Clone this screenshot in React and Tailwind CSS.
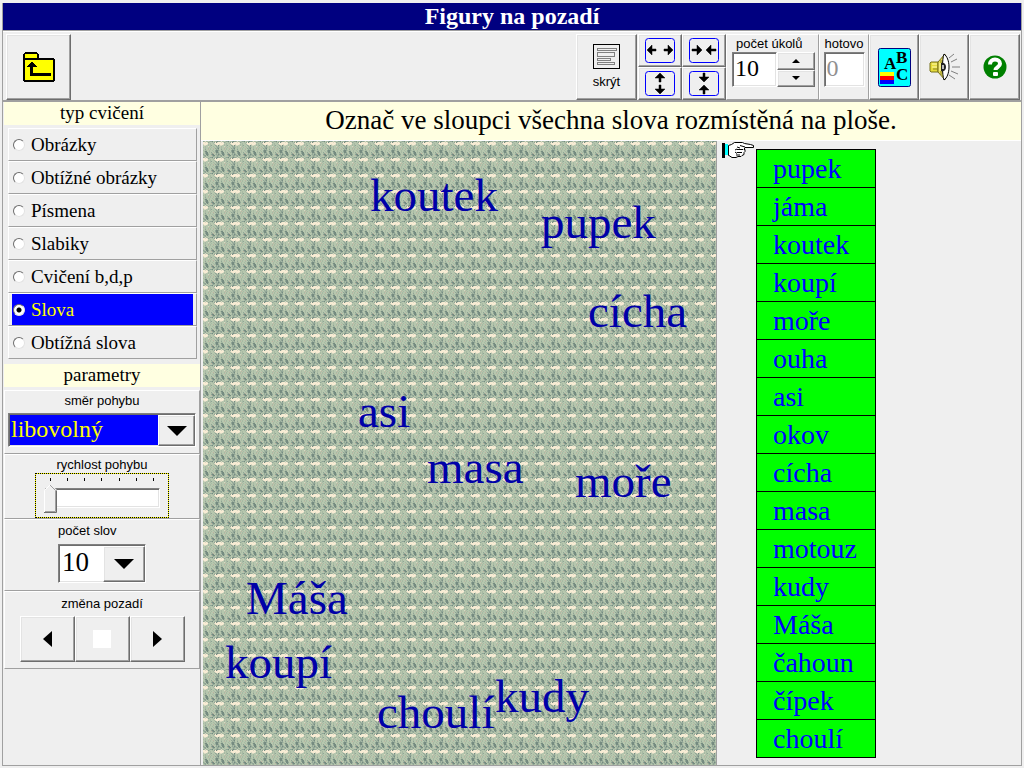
import React, { useState } from 'react';

const EXERCISES = [
    'Obrázky',
    'Obtížné obrázky',
    'Písmena',
    'Slabiky',
    'Cvičení b,d,p',
    'Slova',
    'Obtížná slova',
];

const COLUMN = [
    'pupek', 'jáma', 'koutek', 'koupí', 'moře', 'ouha', 'asi', 'okov',
    'cícha', 'masa', 'motouz', 'kudy', 'Máša', 'čahoun', 'čípek', 'choulí',
];

const BOARD = [
    { text: 'koutek', pos: 'left-[167px] top-[27px]' },
    { text: 'pupek', pos: 'left-[338px] top-[54px]' },
    { text: 'cícha', pos: 'left-[385px] top-[143px]' },
    { text: 'asi', pos: 'left-[155px] top-[243px]' },
    { text: 'masa', pos: 'left-[224px] top-[299px]' },
    { text: 'moře', pos: 'left-[372px] top-[313px]' },
    { text: 'Máša', pos: 'left-[43px] top-[430px]' },
    { text: 'koupí', pos: 'left-[22px] top-[494px]' },
    { text: 'choulí', pos: 'left-[174px] top-[544px]' },
    { text: 'kudy', pos: 'left-[292px] top-[528px]' },
];

// 16x16 stone tile, one letter per pixel
const TILE = [
    'cbebbabccdabbcdc',
    'wwewecbaabacwdew',
    'wwwwwaabaabewwww',
    'ewwwebabaaabewww',
    'aeeaababcaaacbed',
    'aabaaeabaabaacbc',
    'babaaapabaababcc',
    'aabaababaapacbcd',
    'aacaapabaabaacbc',
    'babbaabaabaacddc',
    'abddaabaaabacddb',
    'aacddabacaabbddc',
    'bacddbaabcpaacbc',
    'cbaddcaacddabcbd',
    'bccbdbaapcddabcc',
    'abcaabaaabcbabcb',
];

const TONES = {
    a: '#b7c7ae',
    b: '#a7b9a3',
    c: '#8fa496',
    d: '#758b80',
    e: '#d9d8c2',
    w: '#f8ecd4',
    p: '#bfb3a1',
};

const RAISED = 'bg-[#efefef] border border-t-white border-l-white border-b-[#6d6d6d] border-r-[#6d6d6d] shadow-[inset_-1px_-1px_0_#a0a0a0,inset_1px_1px_0_#e3e3e3]';
const SUNKEN = 'border border-t-[#808080] border-l-[#808080] border-b-white border-r-white shadow-[inset_1px_1px_0_#6d6d6d,inset_-1px_-1px_0_#e3e3e3]';
const PANEL = 'border border-t-white border-l-white border-b-[#a0a0a0] border-r-[#a0a0a0]';

const Stones = () => (
    <svg className="absolute inset-0 size-full" shapeRendering="crispEdges" aria-hidden="true">
        <defs>
            <pattern id="stones" width="16" height="16" patternUnits="userSpaceOnUse">
                {TILE.map((row, y) =>
                    row.split('').map((tone, x) => (
                        <rect key={`${x}-${y}`} x={x} y={y} width="1" height="1" fill={TONES[tone]} />
                    ))
                )}
            </pattern>
        </defs>
        <rect width="100%" height="100%" fill="url(#stones)" />
    </svg>
);

const FolderUp = () => (
    <svg width="32" height="30" viewBox="0 0 32 30" shapeRendering="crispEdges" aria-hidden="true">
        <path d="M2 0h12v1h1v1h1v4h15v1h1v22h-1v1H1v-1H0V2h1V1h1z" fill="#000" />
        <path d="M2 2h12v4H2zM2 8h28v20H2z" fill="#ff0" />
        <path d="M8 10h2v1h1v1h1v1h1v1h1v1h-4v6h18v3H7v-9H4v-1h1v-1h1v-1h1v-1h1z" fill="#000" />
    </svg>
);

const TextBlock = () => (
    <svg width="27" height="25" viewBox="0 0 27 25" shapeRendering="crispEdges" aria-hidden="true">
        <rect x="0.5" y="0.5" width="26" height="24" fill="none" stroke="#000" />
        <path
            d="M4.5 4.5h19v2h-19zM4.5 8.5h17v4h-17zM4.5 14.5h13v2h-13zM4.5 18.5h17v2h-17z"
            fill="none"
            stroke="#808080"
        />
    </svg>
);

const ARROWS = {
    wide: 'M2 12l5-5v4h4v2H7v4zM28 12l-5-5v4h-4v2h4v4z',
    narrow: 'M13 12l-5-5v4H3v2h5v4zM17 12l5-5v4h5v2h-5v4z',
    tall: 'M15 2l5 5h-4v4h-2V7h-4zM15 23l5-5h-4v-4h-2v4h-4z',
    short: 'M15 11l5-5h-4V2h-2v4h-4zM15 14l5 5h-4v4h-2v-4h-4z',
};

const ArrowButton = ({ kind, label }) => (
    <button type="button" aria-label={label} className={`flex items-center justify-center ${RAISED}`}>
        <svg width="30" height="25" viewBox="0 0 30 25" aria-hidden="true">
            <rect x="0.5" y="0.5" width="29" height="24" rx="3" fill="none" stroke="#00f" />
            <path d={ARROWS[kind]} fill="#000" stroke="#000" strokeWidth="0.5" />
        </svg>
    </button>
);

const AbcIcon = () => (
    <svg width="33" height="39" viewBox="0 0 33 39" aria-hidden="true">
        <rect x="0.5" y="0.5" width="32" height="38" rx="2" fill="#0ff" stroke="#000080" />
        <g fontFamily="Liberation Serif, serif" fontWeight="bold" fontSize="17">
            <text x="6" y="21">A</text>
            <text x="18" y="15">B</text>
            <text x="18" y="32">C</text>
        </g>
        <path d="M2 24h14v4H2z" fill="#ff0" />
        <path d="M2 28h14v4H2z" fill="#f00" />
        <path d="M2 32h14v4H2z" fill="#00f" />
    </svg>
);

const Speaker = () => (
    <svg width="31" height="28" viewBox="0 0 31 28" aria-hidden="true">
        <path d="M1 10l1-1h7v10H2l-1-1z" fill="#e6dc3a" stroke="#77701c" />
        <path d="M9 9l7-8v26l-7-8z" fill="#e8de5a" stroke="#77701c" />
        <path d="M3 11h5M3 14h5M11 10v8" stroke="#fffbb0" />
        <path d="M4 16h5M12 7v3M12 18v4" stroke="#8c8420" />
        <path d="M15 1c3 2 5 7 5 13s-2 11-5 13c-2-5-2-21 0-26z" fill="#fff" stroke="#000" />
        <path d="M12 10c3-1 5 1 5 4s-2 5-5 4z" fill="#222" />
        <path d="M13 12h2v4h-2z" fill="#bbb" />
        <path d="M20 5l5-4M22 9l6-3M23 14h8M22 18l7 3M20 22l6 4" stroke="#808080" fill="none" />
    </svg>
);

const Help = () => (
    <svg width="24" height="24" viewBox="0 0 24 24" aria-hidden="true">
        <circle cx="12" cy="12" r="11.5" fill="#008000" />
        <path d="M7 9.5c0-3 2-5 5-5s5 1.800 5 4.200c0 3.300-4.500 3.300-4.500 6.300" fill="none" stroke="#fff" strokeWidth="4" />
        <rect x="10" y="17" width="5" height="4" rx="1" fill="#fff" />
    </svg>
);

const Hand = () => (
    <svg className="mt-px" width="33" height="17" viewBox="0 0 33 17" aria-hidden="true">
        <path
            d="M6.500 3.500l3-1 3-2h8l2 1 6 1 3 1v2h-8.500l-1 2h1v2l-1 1v2l-2 1-1 1h-3l-2 1h-4l-3-2H6.500z"
            fill="#fff"
            stroke="#000"
        />
        <path d="M18 3.500l5 1.500M15 5l3 1M15 7.500h6M13 8l2-1M15 10.500h5M13 10l2 1.500M14 13h4" stroke="#000" fill="none" />
        <path d="M0 1h3v15H0z" fill="#000" />
        <path d="M3 2h3v11H3z" fill="#0ff" />
    </svg>
);

const DownArrow = () => (
    <svg width="20" height="10" viewBox="0 0 20 10" aria-hidden="true">
        <path d="M0 0h20L10 10z" />
    </svg>
);

const Combo = ({ id, options, className, selectClass, arrowClass }) => (
    <div className={`relative ${className}`}>
        <select id={id} className={`block size-full appearance-none outline-none ${SUNKEN} ${selectClass}`}>
            {options.map((option) => (
                <option key={option}>{option}</option>
            ))}
        </select>
        <span
            className={`absolute right-px top-0.5 bottom-px flex items-center justify-center pointer-events-none ${RAISED} ${arrowClass}`}
        >
            <DownArrow />
        </span>
    </div>
);

const SpeedSlider = () => {
    const [speed, setSpeed] = useState(0);

    return (
        <div className="w-[134px] h-[45px] border border-dotted border-black bg-[#ffff00]">
            <div className="relative size-full bg-[#efefef]">
                <div className="flex justify-between px-[14px] pt-1 h-[14px]">
                    {[0, 1, 2, 3, 4, 5, 6].map((tick) => (
                        <span key={tick} className="w-px h-[3px] bg-black" />
                    ))}
                </div>
                <input
                    id="speed"
                    type="range"
                    min="0"
                    max="6"
                    value={speed}
                    onChange={(e) => setSpeed(Number(e.target.value))}
                    className={`block ml-[9px] w-[115px] h-5 appearance-none bg-white outline-none ${SUNKEN} [&::-webkit-slider-thumb]:appearance-none [&::-webkit-slider-thumb]:w-3 [&::-webkit-slider-thumb]:h-5`}
                />
                <svg
                    className="absolute top-[10px] pointer-events-none"
                    style={{ left: 8 + speed * 17 }}
                    width="13"
                    height="29"
                    viewBox="0 0 13 29"
                    aria-hidden="true"
                >
                    <path d="M0 6l6-6 7 6v23H0z" fill="#efefef" />
                    <path d="M0.5 28V6.500L6 1" fill="none" stroke="#fff" />
                    <path d="M6 1l5.500 5.500V27.500H1" fill="none" stroke="#a0a0a0" />
                    <path d="M12.500 6.500V28.500H0" fill="none" stroke="#6d6d6d" />
                </svg>
            </div>
        </div>
    );
};

const Toolbar = () => (
    <div className="flex items-stretch justify-between h-[71px] pt-0.5 pl-[3px] pr-px border-t border-t-white border-b-2 border-b-[#a0a0a0]">
        <button type="button" aria-label="zpět" className={`flex items-center justify-center w-[65px] ${RAISED}`}>
            <FolderUp />
        </button>

        <div className="flex text-[13px] leading-4">
            <button type="button" className={`flex flex-col items-center justify-end gap-[5px] w-[61px] pb-[9px] mr-px ${RAISED}`}>
                <TextBlock />
                <span>skrýt</span>
            </button>

            <div className="grid grid-cols-2 grid-rows-2 w-[88px]">
                <ArrowButton kind="wide" label="roztáhnout vodorovně" />
                <ArrowButton kind="narrow" label="stáhnout vodorovně" />
                <ArrowButton kind="tall" label="roztáhnout svisle" />
                <ArrowButton kind="short" label="stáhnout svisle" />
            </div>

            <div className={`flex flex-col w-[93px] pl-[5px] pt-px ${PANEL}`}>
                <label htmlFor="tasks" className="pl-1">počet úkolů</label>
                <div className="flex">
                    <input
                        id="tasks"
                        type="text"
                        defaultValue="10"
                        className={`w-[45px] h-[35px] pl-0.5 pb-0.5 bg-white font-['Liberation_Serif',serif] text-[24px] outline-none ${SUNKEN}`}
                    />
                    <div className="flex flex-col w-[38px]">
                        <button type="button" aria-label="více" className={`flex grow items-center justify-center ${RAISED}`}>
                            <svg width="8" height="4" viewBox="0 0 8 4"><path d="M4 0l4 4H0z" /></svg>
                        </button>
                        <button type="button" aria-label="méně" className={`flex grow items-center justify-center ${RAISED}`}>
                            <svg width="8" height="4" viewBox="0 0 8 4"><path d="M0 0h8L4 4z" /></svg>
                        </button>
                    </div>
                </div>
            </div>

            <div className={`flex flex-col items-center w-[50px] pt-px ${PANEL}`}>
                <label htmlFor="done">hotovo</label>
                <input
                    id="done"
                    type="text"
                    defaultValue="0"
                    readOnly
                    className={`w-[41px] h-[35px] pl-0.5 pb-0.5 bg-white text-[#909090] font-['Liberation_Serif',serif] text-[24px] outline-none ${SUNKEN}`}
                />
            </div>

            <button type="button" aria-label="písmo a barvy" className={`flex items-center justify-center w-[50px] ${RAISED}`}>
                <AbcIcon />
            </button>
            <button type="button" aria-label="zvuk" className={`flex items-center justify-center w-[50px] pl-px ${RAISED}`}>
                <Speaker />
            </button>
            <button type="button" aria-label="nápověda" className={`flex items-center justify-center w-[51px] ${RAISED}`}>
                <Help />
            </button>
        </div>
    </div>
);

const Sidebar = () => {
    const [exercise, setExercise] = useState('Slova');

    return (
        <aside className="w-[198px] shrink-0 pl-px border-r border-r-[#a0a0a0] text-[13px] leading-4">
            <h2 className="h-[23px] bg-[#ffffe1] text-center font-['Liberation_Serif',serif] text-[19px] leading-[22px]">
                typ cvičení
            </h2>

            <div
                role="radiogroup"
                aria-label="typ cvičení"
                className="mt-[3px] ml-1 mr-[3px] font-['Liberation_Serif',serif] text-[19px]"
            >
                {EXERCISES.map((name) => (
                    <div key={name} className={`h-[33px] px-[3px] ${PANEL}`}>
                        <label className="flex items-center gap-[6px] h-full pl-px has-checked:bg-[#0000ff] has-checked:text-[#ffff00]">
                            <input
                                type="radio"
                                name="exercise"
                                checked={exercise === name}
                                onChange={() => setExercise(name)}
                                className="appearance-none size-3 shrink-0 rounded-full bg-white border border-t-[#6d6d6d] border-l-[#6d6d6d] border-b-[#e3e3e3] border-r-[#e3e3e3] checked:bg-[radial-gradient(circle,#000_2px,#fff_3px)]"
                            />
                            {name}
                        </label>
                    </div>
                ))}
            </div>

            <h2 className="mt-[5px] h-[23px] bg-[#ffffe1] text-center font-['Liberation_Serif',serif] text-[19px] leading-[22px]">
                parametry
            </h2>

            <div className="mt-[3px]">
                <div className={`flex flex-col items-center h-16 pt-0.5 gap-1 ${PANEL}`}>
                    <label htmlFor="direction">směr pohybu</label>
                    <Combo
                        id="direction"
                        options={['libovolný', 'vodorovný', 'svislý']}
                        className="w-[188px] h-[34px]"
                        selectClass="pl-0.5 pb-0.5 bg-[#0000ff] text-[#ffff00] font-['Liberation_Serif',serif] text-[24px] leading-[30px]"
                        arrowClass="w-[37px]"
                    />
                </div>

                <div className={`flex flex-col items-center h-[65px] pt-0.5 ${PANEL}`}>
                    <label htmlFor="speed">rychlost pohybu</label>
                    <SpeedSlider />
                </div>

                <div className={`flex flex-col items-center h-[72px] pt-[3px] gap-[5px] ${PANEL}`}>
                    <div className="w-[88px]">
                        <label htmlFor="count">počet slov</label>
                    </div>
                    <Combo
                        id="count"
                        options={['10', '8', '6', '4']}
                        className="w-[88px] h-[39px]"
                        selectClass="pl-[3px] pb-0.5 bg-white font-['Liberation_Serif',serif] text-[27px] leading-[35px]"
                        arrowClass="w-[42px]"
                    />
                </div>

                <div className={`flex flex-col items-center h-[78px] pt-1 gap-1 ${PANEL}`}>
                    <span>změna pozadí</span>
                    <div className="flex h-[46px]">
                        <button type="button" aria-label="předchozí pozadí" className={`flex items-center justify-center w-[55px] ${RAISED}`}>
                            <svg width="9" height="16" viewBox="0 0 9 16"><path d="M9 0v16L0 8z" /></svg>
                        </button>
                        <button type="button" aria-label="bílé pozadí" className={`flex items-center justify-center w-[55px] ${RAISED}`}>
                            <span className="size-[18px] bg-white" />
                        </button>
                        <button type="button" aria-label="další pozadí" className={`flex items-center justify-center w-[55px] ${RAISED}`}>
                            <svg width="9" height="16" viewBox="0 0 9 16"><path d="M0 0v16l9-8z" /></svg>
                        </button>
                    </div>
                </div>
            </div>
        </aside>
    );
};

const App = () => (
    <div className="flex flex-col min-h-screen pt-[3px] px-0.5 pb-0.5 bg-[#efefef] text-black font-['Liberation_Sans',sans-serif]">
        <div className="flex flex-col grow border-l border-r border-b border-[#a0a0a0]">
            <h1 className="h-7 bg-[#000080] border-b border-b-[#a0a0a0] text-center text-white font-['Liberation_Serif',serif] font-bold text-[24px] leading-[26px]">
                Figury na pozadí
            </h1>

            <Toolbar />

            <div className="flex grow">
                <Sidebar />

                <main className="flex flex-col grow font-['Liberation_Serif',serif]">
                    <p className="h-[39px] bg-[#ffffe1] border-b border-b-white text-center text-[27px] leading-9">
                        Označ ve sloupci všechna slova rozmístěná na ploše.
                    </p>

                    <div className="flex grow pl-0.5">
                        <div className="relative grow overflow-hidden text-[#0000a8] text-[47px] leading-[54px]">
                            <Stones />
                            {BOARD.map((word) => (
                                <span key={word.text} className={`absolute ${word.pos}`}>
                                    {word.text}
                                </span>
                            ))}
                        </div>

                        <div className="flex items-start gap-px w-[305px] shrink-0 pl-[5px] border-l border-l-[#a0a0a0]">
                            <Hand />
                            <ul className="w-[120px] mt-2 border border-black divide-y divide-black bg-[#00ff00] text-[#0000ff] text-[28px]">
                                {COLUMN.map((word) => (
                                    <li key={word}>
                                        <button type="button" className="block w-full h-[37px] pl-4 text-left leading-9">
                                            {word}
                                        </button>
                                    </li>
                                ))}
                            </ul>
                        </div>
                    </div>
                </main>
            </div>
        </div>
    </div>
);

export default App;
